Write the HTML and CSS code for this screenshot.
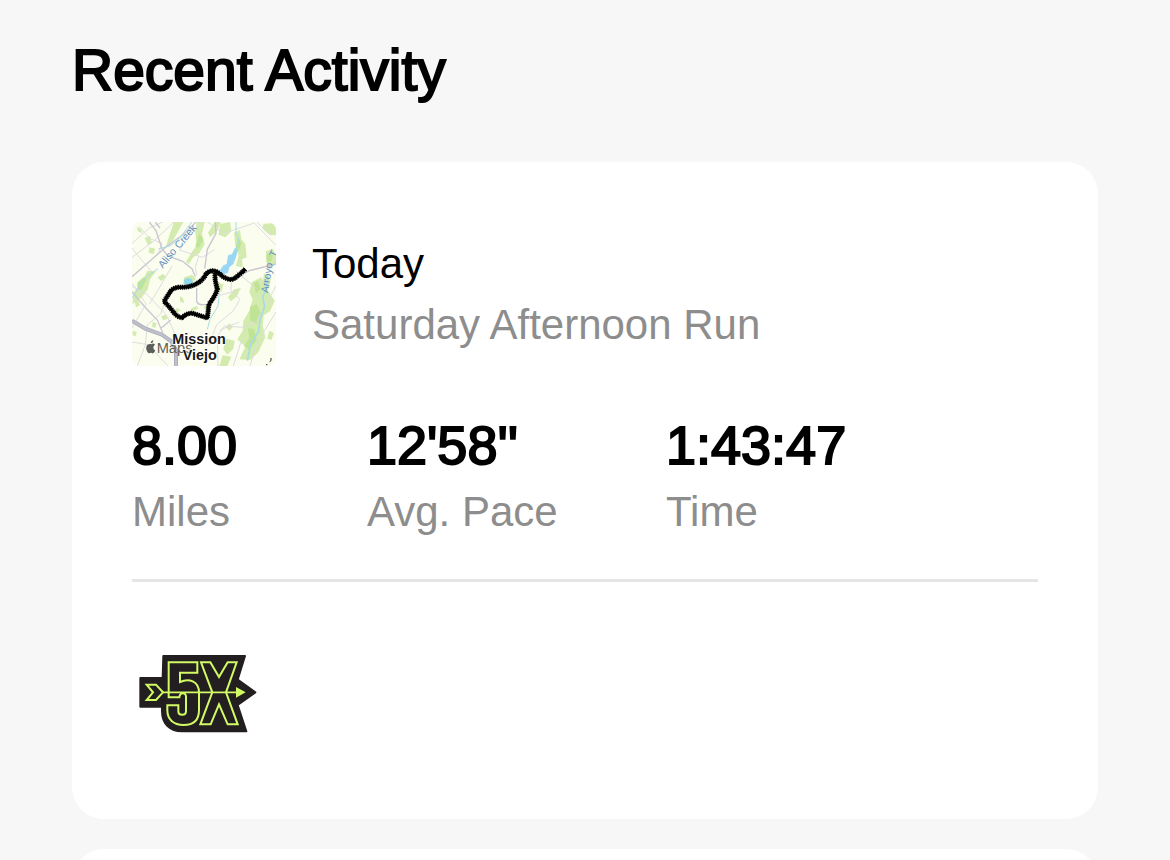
FILE: index.html
```html
<!DOCTYPE html>
<html lang="en">
<head>
    <meta charset="UTF-8">
    <meta name="viewport" content="width=device-width, initial-scale=1.0">
    <link rel="stylesheet" href="styles.css">
    <title>Recent Activity</title>
</head>
<body>
    <main class="activity-page">
        <h1 class="page-title">Recent Activity</h1>
        <article class="card">
            <header class="run-header">
                <svg class="run-map" viewBox="24 24 432 432" role="img" aria-label="Map of the run">
                    <rect x="24" y="24" width="432" height="432" fill="#fbfdee"/>
                    <!-- parks -->
                    <g fill="#d3ebae">
                        <path d="M150 24h28l-12 22-18 32-22 20 10-34z"/>
                        <path d="M218 24h24l-8 36 8 30-16 28-18 12-14 20-8-6 16-28 16-22-4-40z"/>
                        <path d="M272 24h18l-10 26-22 20-6-14zM288 30l30-6 4 28-18 18-20-8z"/>
                        <path d="M330 56l18-8 4 28 12 14 4 40-14 6 2 24-20-4 8-32-10-30z"/>
                        <path d="M70 170l26 2-18 24-6 28-18 26-28 20 2-34 24-28z"/>
                        <path d="M62 72l16-6 6 20-12 8zM76 100l18 4-6 16-14-4zM38 40l12 4 6 14-14-6z"/>
                        <path d="M384 204l28-14 10 20-8 26 14 26-8 32-4 40 8 36-22 46-24 22-32-2 18-38-24-22 16-26 2-30 18-30 10-34-10-22z"/>
                        <path d="M418 30l28-2 10 12v24l-20-2-20-18zM426 112l20-8 10 22v24l-22 14-8-24z"/>
                        <path d="M420 178l20 18-8 34 20 30-14 32-22 14 4-42-8-30z"/>
                        <path d="M306 374l26 6-4 24-18 18-12-16zM296 424l26 4-12 28h-24z"/>
                        <path d="M330 226l20-4-12 26-18 14-8-12zM282 204l16 8-6 22-12-4zM306 340l10-12 10 12-10 10z"/>
                        <path d="M168 246l10 8 2 14-12-6zM148 292l12-10 10 6-14 10zM112 306l14-4 4 14-14 2z"/>
                        <path d="M86 324l12 4-4 14-10-4zM32 262l10-4 6 16-12 6zM238 280l14-14 10 8-16 14z"/>
                        <path d="M180 190l24-8 12 14-18 14h-20zM100 190l18-10 8 8-14 14z"/>
                        <path d="M436 350l14 8-8 20-12-4zM200 284l18-8 4 8-18 8zM26 350l12 4-2 12-10-2z"/>
                    </g>
                    <g fill="#bfe496">
                        <path d="M388 208l14-8 8 24-14 14zM378 278l20-8 12 26-12 34-20-12zM372 342l18 4 8 32-22 30-16-12 16-24z"/>
                        <path d="M226 60l12 16-14 26-10-6zM342 70l10 18-8 24-8-14zM40 206l20-18 8 8-14 28-14 8zM428 120l18 4-4 18-12 4z"/>
                    </g>
                    <!-- streets -->
                    <g fill="none" stroke="#dddce0" stroke-width="3">
                        <path d="M24 88l52-46 40-18M24 130l64-48 62-58M44 36l34 38 36 14M24 102l32 40 30 34M114 88l-12 34M24 216l46 26 58 62 24 54"/>
                        <path d="M144 156l-44 76-24 38M230 24l-22 30-42 54 70 22 36-24M224 128l-10 32 4 24M250 24l50 34 88-30M388 24l68 70M398 24l44 40"/>
                        <path d="M324 194l-4 34 28 28-20 34-50 42-24 62M288 244l62-18M336 172l62 52M456 216l-58 106-42 18-54-4-22 30 2 90"/>
                        <path d="M24 384l48 8 60 64M40 456l24-64 6-60 40-32 10-30M24 342l42-72-42-62M328 456l24-76M456 294l-58 94-20 68M288 348l58-24"/>
                    </g>
                    <g fill="none" stroke="#c9c6d2" stroke-width="4">
                        <path d="M76 24l20 26 18 54 18 22 44 16 28 22 10 24M24 188l80-70 28-24 48-34 36-36M274 24l2 34-26 48-8 58M24 234l36 42 40 42 16 38"/>
                        <path d="M456 150l-80 20-16 8M218 222v40q4 12 22 10h18M94 24l14 18M112 342l28-24"/>
                    </g>
                    <!-- creeks -->
                    <g fill="none" stroke="#a8dce3" stroke-width="3">
                        <path d="M24 252l20-30 24-34 34-24M104 104l34-8 24-18 42-54M336 24v30l10 26-14 34M276 196l10 40-4 40-24 40-8 30"/>
                        <path d="M432 180l-6 48-10 20 6 30-14 38-4 36-24 38-10 50" stroke-width="5"/>
                    </g>
                    <path d="M334 100l8 8-6 22-8 20-12 10-4 16-22 8-4-12 12-18 10-4 4-26 12-4z" fill="#9ad7f4"/>
                    <path d="M180 198l10-6 12 2 6 12-12 8-14-2z" fill="#90d6ee"/>
                    <!-- freeway -->
                    <path d="M24 320l40 24 50 18 28 20 14 26v48" fill="none" stroke="#aaabba" stroke-width="12"/>
                    <path d="M24 320l40 24 50 18 28 20 14 26v48" fill="none" stroke="#bec0cc" stroke-width="7"/>
                    <g class="map-water-label">
                        <text transform="translate(116 164) rotate(-50)">Aliso</text>
                        <text transform="translate(166 106) rotate(-50)">Creek</text>
                        <text transform="translate(432 238) rotate(-81)">Arroyo</text>
                        <text transform="translate(454 132) rotate(-65)">T</text>
                    </g>
                    <!-- route -->
                    <g fill="none" stroke="#000" stroke-linejoin="round">
                        <path d="M364 165Q352 178 342 184Q330 198 316 196Q298 192 286 178Q264 162 246 180Q236 202 210 213Q190 221 162 220Q146 222 138 234L120 262Q132 274 142 286Q158 310 174 311Q190 296 206 298L250 312Q252 294 255 270Q276 244 280 224Q272 202 273 178" stroke-width="10"/>
                        <path d="M364 165Q352 178 342 184Q330 198 316 196Q298 192 286 178Q264 162 246 180Q236 202 210 213Q190 221 162 220Q146 222 138 234L120 262Q132 274 142 286Q158 310 174 311Q190 296 206 298L250 312Q252 294 255 270Q276 244 280 224Q272 202 273 178" stroke-width="15" stroke-dasharray="4 2"/>
                    </g>
                    <!-- map credit -->
                    <g fill="#5d5f5b">
                        <path d="M82 391c4-3 8-3 11 1-7 5-6 14 1 17-3 7-6 10-9 9-3-2-5-2-8 0-5 1-12-10-10-20 2-7 8-9 15-7zM80 388c0-5 3-8 8-9 0 5-3 9-8 9z"/>
                        <text class="map-credit" x="98" y="417">Maps</text>
                    </g>
                    <text class="map-city" x="225" y="390">Mission</text>
                    <text class="map-city" x="227" y="437">Viejo</text>
                    <path d="M441 432v8l-4 3M426 452h4" fill="none" stroke="#333" stroke-width="3"/>
                </svg>
                <div class="run-info">
                    <h2 class="run-date">Today</h2>
                    <p class="run-name">Saturday Afternoon Run</p>
                </div>
            </header>
            <dl class="stats">
                <div class="stat">
                    <dt class="stat-label">Miles</dt>
                    <dd class="stat-value">8.00</dd>
                </div>
                <div class="stat">
                    <dt class="stat-label">Avg. Pace</dt>
                    <dd class="stat-value">12'58''</dd>
                </div>
                <div class="stat">
                    <dt class="stat-label">Time</dt>
                    <dd class="stat-value">1:43:47</dd>
                </div>
            </dl>
            <footer class="badges">
                <svg class="badge" viewBox="6 -90 432 432" role="img" aria-label="5X badge">
                    <path d="M100 33h245l-22 71 53 38-53 38 26 79H156c-36 0-60-22-60-60v-14H31V99h67z" fill="#231f20" stroke="#231f20" stroke-width="6" stroke-linejoin="round"/>
                    <g fill="none" stroke="#d2fa64" stroke-width="6">
                        <path d="M116 157V52h86v31h-52v28c26-12 57-4 57 32v52c0 28-15 45-46 45s-49-17-49-45v-14h33v18c0 14 23 14 23 0v-44c0-14-18-14-20 2z"/>
                        <path d="M213 52h28l26 44 26-44h27l-32 90 35 96h-30l-26-60-25 60h-31l36-96z"/>
                        <path d="M50 119h28l21 23-21 23H50l19-23z"/>
                        <path d="M99 142h223" stroke-width="5"/>
                    </g>
                    <path d="M318 126l29 16-29 16z" fill="#d2fa64"/>
                </svg>
            </footer>
        </article>
        <article class="card"></article>
    </main>
</body>
</html>
```

FILE: styles.css
```css
body {
    margin: 0;
    background-color: #f7f7f7;
    color: #000;
    font-family: "Liberation Sans", Arial, sans-serif;
}

h1, h2, p, dl, dd {
    margin: 0;
    font-weight: normal;
}

.activity-page {
    padding: 40px 72px;
}

.page-title {
    margin-bottom: 62px;
    font-size: 57px;
    line-height: 60px;
    -webkit-text-stroke: 2px #000;
}

.card {
    padding: 60px;
    margin-bottom: 30px;
    background-color: #fff;
    border-radius: 32px;
}

.run-header {
    display: flex;
    align-items: center;
    gap: 36px;
}

.run-map {
    width: 144px;
    height: 144px;
    border-radius: 8px;
}

.map-water-label {
    fill: #668fc2;
    font-size: 31px;
}

.map-credit {
    font-size: 44px;
}

.map-city {
    fill: #181818;
    stroke: #fff;
    stroke-width: 4px;
    paint-order: stroke;
    font-size: 43px;
    font-weight: bold;
    text-anchor: middle;
}

.run-date, .run-name, .stat-label {
    font-size: 42px;
    line-height: 61px;
}

.run-name, .stat-label {
    color: #8d8d8d;
}

.stats {
    display: grid;
    grid-template-columns: 235fr 299fr 372fr;
    padding: 48px 0 37px;
    border-bottom: 3px solid #e5e5e5;
}

.stat {
    display: flex;
    flex-direction: column-reverse;
    gap: 5px;
}

.stat-value {
    font-size: 54px;
    line-height: 62px;
    -webkit-text-stroke: 2px #000;
}

.badges {
    padding-top: 33px;
}

.badge {
    display: block;
    width: 144px;
    height: 144px;
}
```
